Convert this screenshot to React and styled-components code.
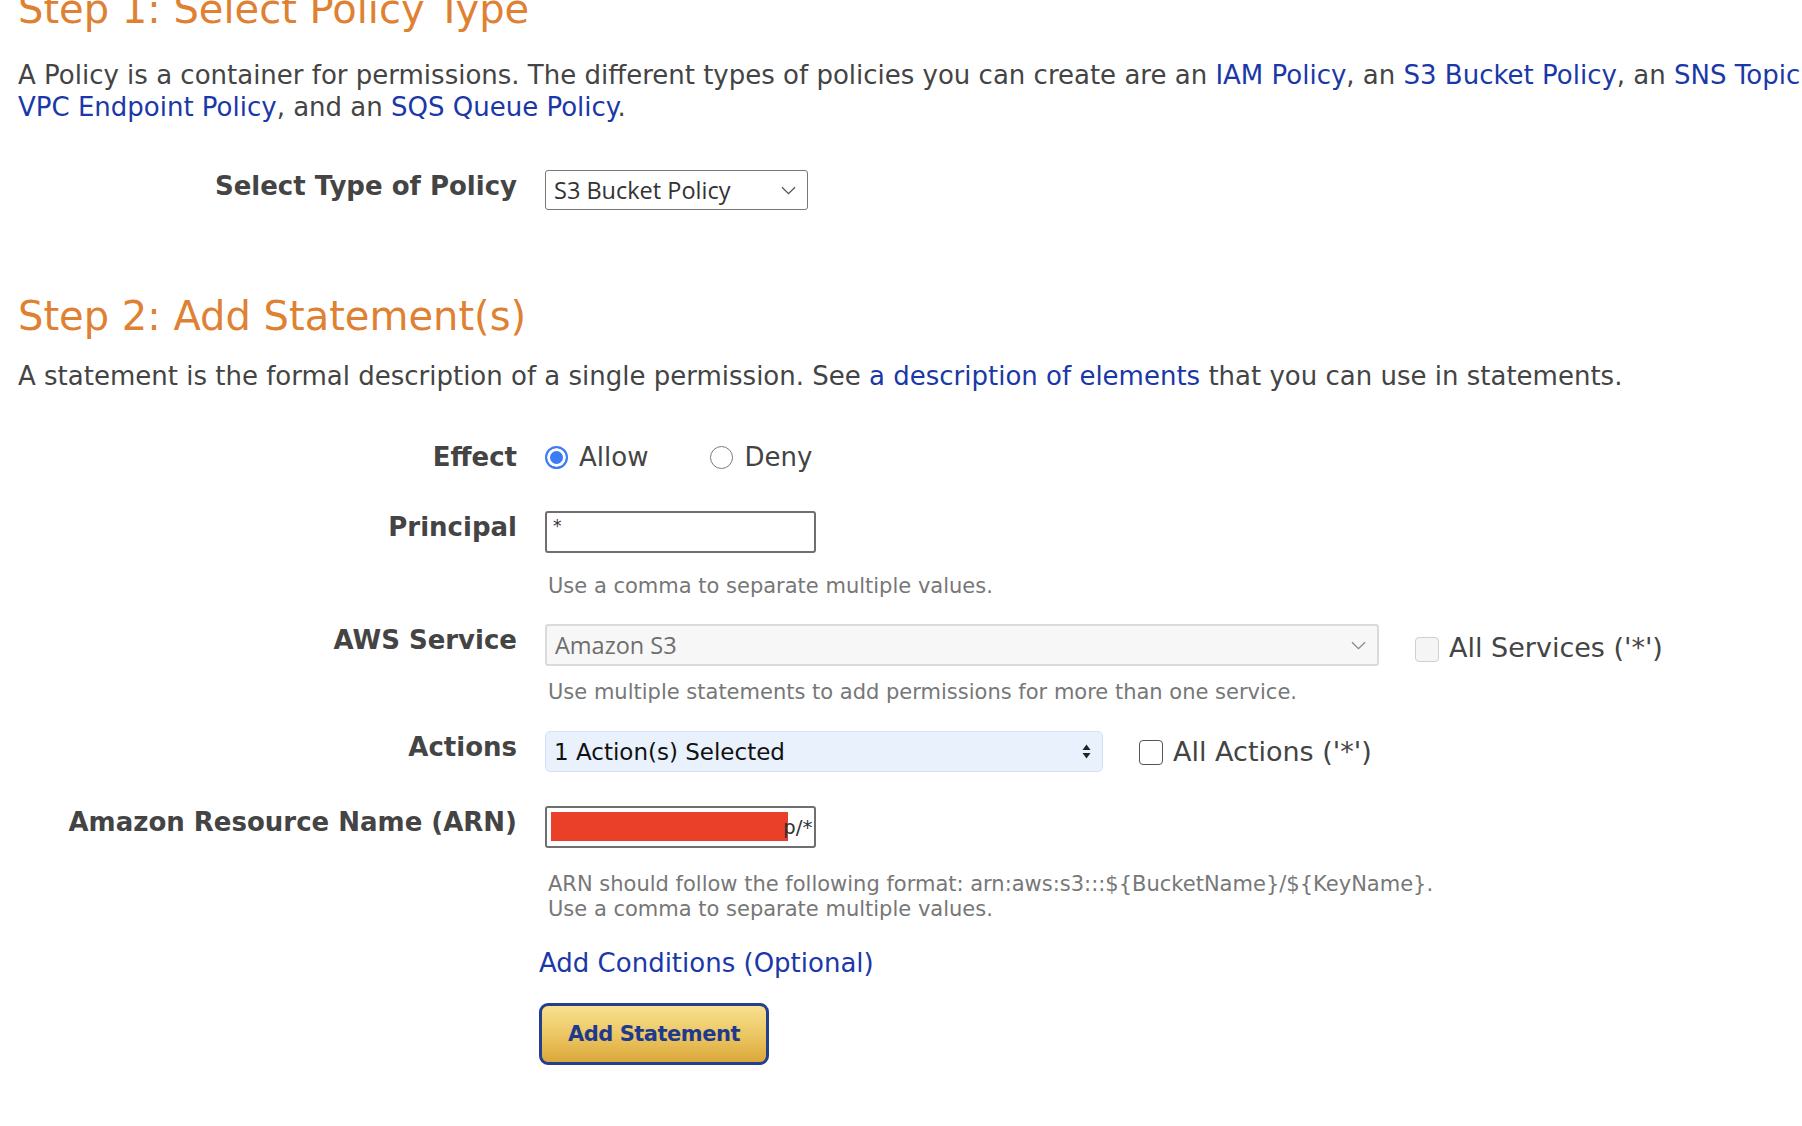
import React from "react";
import styled, { createGlobalStyle } from "styled-components";

const GlobalStyle = createGlobalStyle`
  html, body {
    margin: 0;
    padding: 0;
    background: #ffffff;
    overflow: hidden;
  }
  body {
    font-family: Verdana, "DejaVu Sans", sans-serif;
    color: #444444;
  }
`;

const Chevron = ({ color = "#555" }) => (
  <svg width="15" height="9" viewBox="0 0 15 9" fill="none">
    <path d="M1 1.2 L7.5 7.6 L14 1.2" stroke={color} strokeWidth="1.3" />
  </svg>
);

const UpDown = () => (
  <svg width="9" height="15" viewBox="0 0 9 15">
    <path d="M4.5 0.5 L8.5 6 L0.5 6 Z" fill="#222" />
    <path d="M4.5 14.5 L8.5 9 L0.5 9 Z" fill="#222" />
  </svg>
);

const App = () => {
  return (
    <Page>
      <GlobalStyle />

      <StepTitle $top={-15}>Step 1: Select Policy Type</StepTitle>
      <Intro $top={26}>
        A Policy is a container for permissions. The different types of policies you can create are an{" "}
        <Link>IAM Policy</Link>, an <Link>S3 Bucket Policy</Link>, an <Link>SNS Topic Policy</Link>, a
        <br />
        <Link>VPC Endpoint Policy</Link>, and an <Link>SQS Queue Policy</Link>.
      </Intro>

      <FieldRow $top={47}>
        <FieldLabel>Select Type of Policy</FieldLabel>
        <FieldBody>
          <SelectBox $width={263} $height={40} $tone="plain">
            <SelectText>S3 Bucket Policy</SelectText>
            <Chevron />
          </SelectBox>
        </FieldBody>
      </FieldRow>

      <StepTitle $top={82}>Step 2: Add Statement(s)</StepTitle>
      <Intro $top={20}>
        A statement is the formal description of a single permission. See{" "}
        <Link>a description of elements</Link> that you can use in statements.
      </Intro>

      <FieldRow $top={49}>
        <FieldLabel>Effect</FieldLabel>
        <FieldBody>
          <RadioGroup>
            <RadioOption>
              <RadioDot $checked />
              Allow
            </RadioOption>
            <RadioOption>
              <RadioDot />
              Deny
            </RadioOption>
          </RadioGroup>
        </FieldBody>
      </FieldRow>

      <FieldRow $top={38}>
        <FieldLabel>Principal</FieldLabel>
        <FieldBody>
          <TextBox $align="flex-start">
            <Asterisk>*</Asterisk>
          </TextBox>
          <Hint $top={21}>Use a comma to separate multiple values.</Hint>
        </FieldBody>
      </FieldRow>

      <FieldRow $top={25}>
        <FieldLabel>AWS Service</FieldLabel>
        <FieldBody>
          <ControlLine>
            <SelectBox $width={834} $height={42} $tone="muted">
              <SelectText $muted>Amazon S3</SelectText>
              <Chevron color="#888" />
            </SelectBox>
            <CheckOption $offset={3}>
              <CheckMark $disabled />
              All Services ('*')
            </CheckOption>
          </ControlLine>
          <Hint $top={14}>Use multiple statements to add permissions for more than one service.</Hint>
        </FieldBody>
      </FieldRow>

      <FieldRow $top={26}>
        <FieldLabel>Actions</FieldLabel>
        <FieldBody>
          <ControlLine>
            <SelectBox $width={558} $height={41} $tone="active">
              <ActionsText>1 Action(s) Selected</ActionsText>
              <UpDown />
            </SelectBox>
            <CheckOption>
              <CheckMark />
              All Actions ('*')
            </CheckOption>
          </ControlLine>
        </FieldBody>
      </FieldRow>

      <FieldRow $top={34}>
        <FieldLabel>Amazon Resource Name (ARN)</FieldLabel>
        <FieldBody>
          <TextBox $align="center">
            <Redacted />
            <ArnTail>p/*</ArnTail>
          </TextBox>
          <Hint $top={24}>
            ARN should follow the following format: arn:aws:s3:::${"{"}BucketName{"}"}/${"{"}KeyName{"}"}.
            <br />
            Use a comma to separate multiple values.
          </Hint>
          <ConditionsLink>Add Conditions (Optional)</ConditionsLink>
          <AddButton>Add Statement</AddButton>
        </FieldBody>
      </FieldRow>
    </Page>
  );
};

const Page = styled.div`
  box-sizing: border-box;
  width: 100%;
  padding: 0 18px;
  overflow: hidden;
`;

const StepTitle = styled.h1`
  margin: ${(p) => p.$top}px 0 0 0;
  font-size: 40px;
  line-height: 48px;
  font-weight: 400;
  color: #df8133;
`;

const Intro = styled.p`
  margin: ${(p) => p.$top}px 0 0 0;
  font-size: 26px;
  line-height: 32px;
  white-space: nowrap;
  color: #444444;
`;

const Link = styled.a`
  color: #1a38a8;
  text-decoration: none;
  cursor: pointer;
`;

const FieldRow = styled.div`
  display: grid;
  grid-template-columns: 499px auto;
  column-gap: 28px;
  align-items: start;
  margin-top: ${(p) => p.$top}px;
`;

const FieldLabel = styled.div`
  text-align: right;
  font-size: 26px;
  line-height: 32px;
  font-weight: 700;
  color: #444444;
  white-space: nowrap;
`;

const FieldBody = styled.div`
  display: flex;
  flex-direction: column;
  align-items: flex-start;
`;

const ControlLine = styled.div`
  display: flex;
  align-items: center;
`;

const tones = {
  plain: { bg: "#ffffff", border: "1px solid #777777", radius: "3px" },
  muted: { bg: "#f7f7f7", border: "2px solid #dadada", radius: "3px" },
  active: { bg: "#e9f1fd", border: "1.5px solid #d5e2f5", radius: "5px" },
};

const SelectBox = styled.div`
  box-sizing: border-box;
  flex-shrink: 0;
  width: ${(p) => p.$width}px;
  height: ${(p) => p.$height}px;
  display: flex;
  align-items: center;
  justify-content: space-between;
  padding: 0 11px 0 8px;
  background: ${(p) => tones[p.$tone].bg};
  border: ${(p) => tones[p.$tone].border};
  border-radius: ${(p) => tones[p.$tone].radius};
`;

const SelectText = styled.span`
  font-family: "Open Sans", "DejaVu Sans", sans-serif;
  font-size: 23.5px;
  color: ${(p) => (p.$muted ? "#6e6e6e" : "#333333")};
`;

const ActionsText = styled.span`
  font-size: 23px;
  color: #111111;
`;

const TextBox = styled.div`
  box-sizing: border-box;
  width: 271px;
  height: 42px;
  display: flex;
  align-items: ${(p) => p.$align};
  padding: 3px 4px;
  border: 2px solid #6f6f6f;
  border-radius: 3px;
  background: #ffffff;
`;

const Asterisk = styled.span`
  font-size: 17px;
  line-height: 20px;
  color: #333333;
  padding: 0 0 0 2px;
`;

const Redacted = styled.span`
  flex-shrink: 0;
  width: 237px;
  height: 29px;
  margin-top: -2px;
  background: #ea4029;
`;

const ArnTail = styled.span`
  margin-left: -5px;
  font-size: 20px;
  color: #333333;
`;

const Hint = styled.div`
  margin-top: ${(p) => p.$top}px;
  padding-left: 3px;
  font-size: 21px;
  line-height: 25px;
  color: #777777;
  white-space: nowrap;
`;

const RadioGroup = styled.div`
  display: flex;
  align-items: center;
  gap: 62px;
  height: 32px;
`;

const RadioOption = styled.label`
  display: flex;
  align-items: center;
  gap: 11px;
  font-size: 26px;
  line-height: 32px;
  color: #444444;
`;

const RadioDot = styled.span`
  box-sizing: border-box;
  width: 23px;
  height: 23px;
  border-radius: 50%;
  margin-top: 1px;
  border: ${(p) => (p.$checked ? "2px solid #3b7cf3" : "1.5px solid #7a7a7a")};
  background: ${(p) => (p.$checked ? "#3b7cf3" : "#ffffff")};
  box-shadow: ${(p) => (p.$checked ? "inset 0 0 0 3px #ffffff" : "none")};
`;

const CheckOption = styled.label`
  display: flex;
  align-items: center;
  gap: 10px;
  margin-left: 36px;
  margin-top: ${(p) => (p.$offset || 0) * 2}px;
  font-size: 27px;
  line-height: 32px;
  color: #444444;
  white-space: nowrap;
`;

const CheckMark = styled.span`
  box-sizing: border-box;
  flex-shrink: 0;
  width: 24px;
  height: 25px;
  margin-top: 2px;
  border-radius: 4px;
  border: ${(p) => (p.$disabled ? "1.5px solid #cfcfcf" : "1.5px solid #555555")};
  background: ${(p) => (p.$disabled ? "#f5f5f5" : "#ffffff")};
`;

const ConditionsLink = styled.a`
  margin: 25px 0 0 -6px;
  font-size: 26px;
  line-height: 32px;
  color: #1a38a8;
  cursor: pointer;
`;

const AddButton = styled.button`
  margin: 24px 0 0 -6px;
  width: 230px;
  height: 62px;
  border: 3px solid #243f8e;
  border-radius: 9px;
  background: linear-gradient(to bottom, #f8e08e 0%, #ecc865 50%, #dba73a 100%);
  font-family: Verdana, "DejaVu Sans", sans-serif;
  font-size: 21px;
  letter-spacing: -0.5px;
  font-weight: 700;
  color: #1f3a8c;
  cursor: pointer;
`;

export default App;
